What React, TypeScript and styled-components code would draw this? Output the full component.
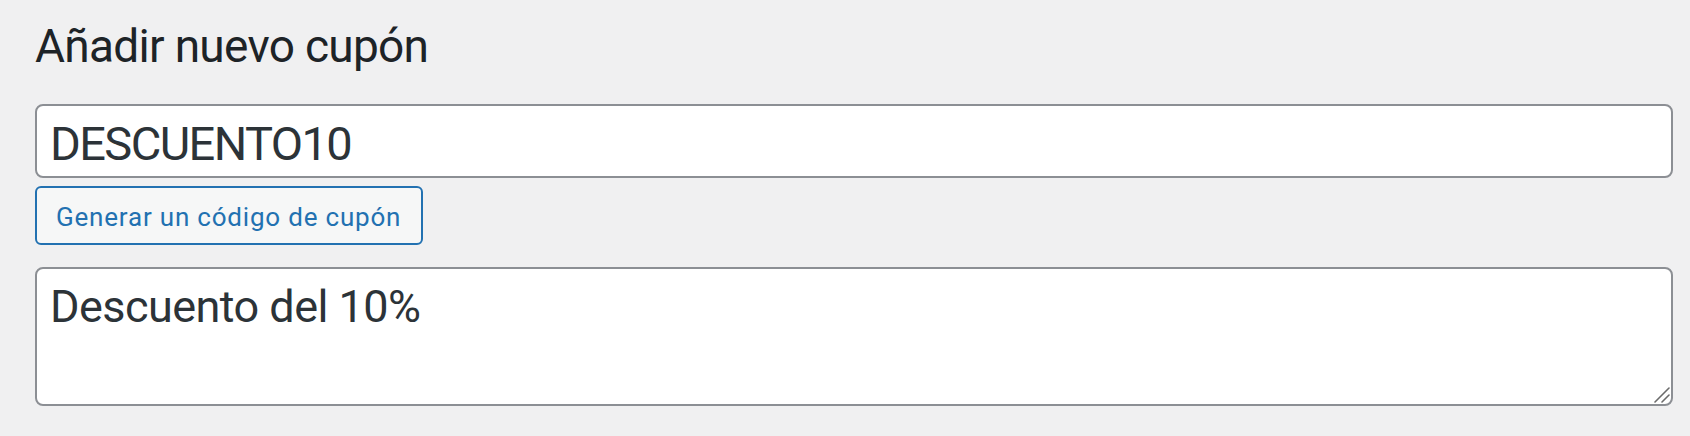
import React from "react";
import styled, { createGlobalStyle } from "styled-components";

const Global = createGlobalStyle`
  html, body { margin: 0; padding: 0; background: #f0f0f1; }
  body { font-family: Roboto, "Noto Sans", "Liberation Sans", sans-serif; }
  * { box-sizing: border-box; }
`;

const Page = styled.div`
  padding: 16px 17px 30px 35px;
  display: flex;
  flex-direction: column;
`;

const Title = styled.h1`
  margin: 0 0 28px;
  font-size: 46px;
  line-height: 60px;
  font-weight: 400;
  color: #1d2327;
  letter-spacing: -0.7px;
`;

const TitleInput = styled.input`
  width: 100%;
  height: 74px;
  border: 2px solid #8c8f94;
  border-radius: 8px;
  background: #fff;
  padding: 4px 13px 0;
  font-family: inherit;
  font-size: 47px;
  letter-spacing: -1.6px;
  color: #2c3338;
  outline: none;
`;

const ButtonRow = styled.div`
  display: flex;
  margin: 8px 0 22px;
`;

const Button = styled.button`
  height: 59px;
  padding: 2px 20px 0 19px;
  border: 2px solid #2271b1;
  border-radius: 6px;
  background: #f6f7f7;
  color: #2271b1;
  font-family: inherit;
  font-size: 26px;
  letter-spacing: 0.8px;
  line-height: 1;
  cursor: pointer;
`;

const AreaWrap = styled.div`
  position: relative;
`;

const Area = styled.textarea`
  display: block;
  width: 100%;
  height: 139px;
  border: 2px solid #8c8f94;
  border-radius: 8px;
  background: #fff;
  padding: 10px 13px;
  font-family: inherit;
  font-size: 45px;
  letter-spacing: -0.55px;
  line-height: 56px;
  color: #2c3338;
  resize: none;
  outline: none;
`;

const Grip = styled.svg`
  position: absolute;
  right: 3px;
  bottom: 3px;
  width: 16px;
  height: 16px;
  pointer-events: none;
`;

export default function App() {
  return (
    <>
      <Global />
      <Page>
        <Title>Añadir nuevo cupón</Title>
        <TitleInput defaultValue="DESCUENTO10" />
        <ButtonRow>
          <Button type="button">Generar un código de cupón</Button>
        </ButtonRow>
        <AreaWrap>
          <Area defaultValue="Descuento del 10%" />
          <Grip viewBox="0 0 16 16">
            <path d="M1 15 L15 1" stroke="#6b6b6b" strokeWidth="1.6" strokeLinecap="round" />
            <path d="M8 15 L15 8" stroke="#6b6b6b" strokeWidth="1.6" strokeLinecap="round" />
          </Grip>
        </AreaWrap>
      </Page>
    </>
  );
}
